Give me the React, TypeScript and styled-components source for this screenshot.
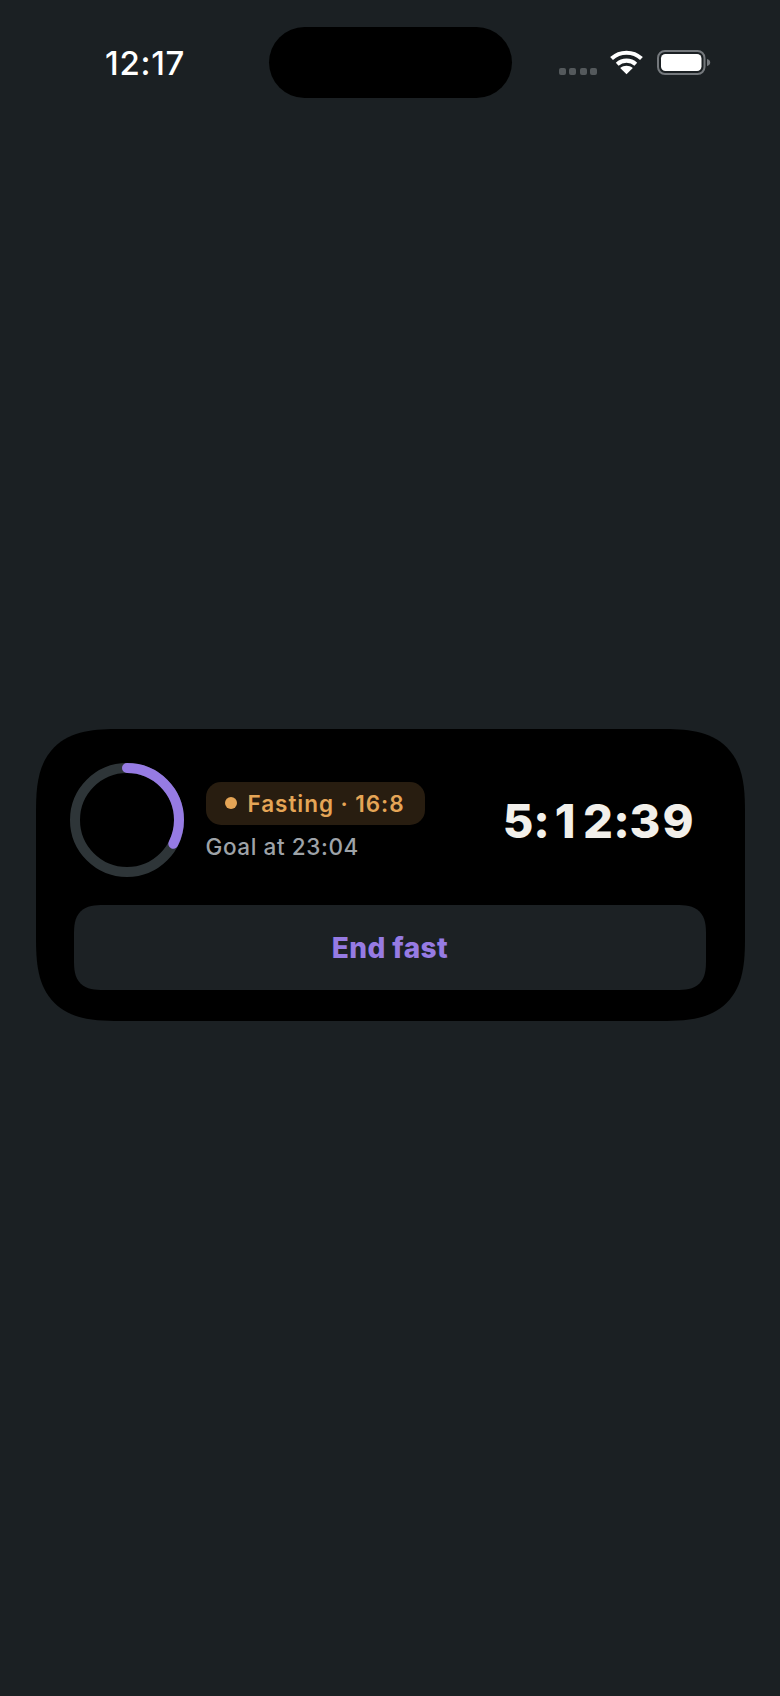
import styled, { createGlobalStyle } from 'styled-components';

const GlobalStyle = createGlobalStyle`
  html, body {
    margin: 0;
    padding: 0;
    background-color: #1b2023;
  }
`;

const Screen = styled.div`
  width: 780px;
  height: 1696px;
  display: flex;
  flex-direction: column;
  background-color: #1b2023;
  font-family: Inter, "Noto Sans", sans-serif;
  overflow: hidden;
`;

const StatusBar = styled.div`
  display: flex;
  align-items: center;
  height: 71px;
  padding: 27px 60px 0 105px;
`;

const Clock = styled.div`
  width: 163.5px;
  flex-shrink: 0;
  font-family: Inter, sans-serif;
  font-size: 33px;
  font-weight: 500;
  color: #ffffff;
  letter-spacing: 0.7px;
`;

const Island = styled.div`
  width: 243px;
  height: 71px;
  flex-shrink: 0;
  border-radius: 36px;
  background-color: #000000;
`;

const StatusIcons = styled.div`
  display: flex;
  align-items: center;
  margin-left: 47.5px;
`;

const SignalDots = styled.div`
  display: flex;
  gap: 3.4px;
  margin: 17px 13px 0 0;
`;

const SignalDot = styled.span`
  width: 7px;
  height: 7px;
  border-radius: 2px;
  background-color: #54595c;
`;

const BatteryGap = styled.span`
  width: 14px;
`;

const Main = styled.main`
  flex: 1;
  display: flex;
  align-items: center;
  justify-content: center;
  padding-bottom: 44px;
`;

const Card = styled.section`
  width: 709px;
  height: 292px;
  box-sizing: border-box;
  padding: 34px 38px 31px;
  display: flex;
  flex-direction: column;
  justify-content: space-between;
  background-color: #000000;
  border-radius: 84px;
  corner-shape: superellipse(1.5);
`;

const TopRow = styled.div`
  display: flex;
  align-items: center;
  margin-left: -4px;
`;

const Info = styled.div`
  display: flex;
  flex-direction: column;
  align-items: flex-start;
  margin-left: 22px;
  flex: 1;
`;

const Pill = styled.div`
  display: flex;
  align-items: center;
  height: 43px;
  width: 219px;
  box-sizing: border-box;
  margin-top: 1px;
  padding-left: 19px;
  gap: 11px;
  border-radius: 15px;
  background-color: #281d10;
  color: #e5a556;
  font-size: 22.5px;
  font-weight: 600;
  letter-spacing: 0.95px;
`;

const PillDot = styled.span`
  width: 12px;
  height: 12px;
  border-radius: 50%;
  background-color: #e5a556;
`;

const Goal = styled.div`
  margin-top: 8px;
  font-size: 22.5px;
  font-weight: 500;
  color: #9ea3a8;
  letter-spacing: 0.6px;
`;

const Timer = styled.div`
  display: flex;
  margin-right: 12px;
  font-size: 47px;
  font-weight: 800;
  color: #f2f0eb;
`;

const TimerCell = styled.span<{ $colon?: boolean }>`
  width: ${props => (props.$colon ? '14px' : '33px')};
  display: flex;
  justify-content: center;
`;

const EndButton = styled.button`
  display: block;
  width: 632px;
  height: 85px;
  padding: 0;
  align-self: center;
  border: none;
  border-radius: 30px;
  corner-shape: superellipse(1.5);
  background-color: #1c2124;
  color: #967be3;
  font-family: Inter, sans-serif;
  font-size: 28px;
  font-weight: 800;
  letter-spacing: 0.45px;
`;

function ProgressRing({ progress }: { progress: number }) {
  const r = 52;
  const c = 2 * Math.PI * r;
  return (
    <svg width="114" height="114" viewBox="0 0 114 114">
      <circle cx="57" cy="57" r={r} fill="none" stroke="#2e3538" strokeWidth="10" />
      <circle
        cx="57"
        cy="57"
        r={r}
        fill="none"
        stroke="#967be3"
        strokeWidth="10"
        strokeLinecap="round"
        strokeDasharray={`${c * progress} ${c}`}
        transform="rotate(-90 57 57)"
      />
    </svg>
  );
}

function WifiIcon() {
  return (
    <svg width="33" height="25" viewBox="0 0 32 24">
      <path d="M1.5 8.2C9.8 0.6 22.2 0.6 30.5 8.2" fill="none" stroke="#fff" strokeWidth="4" />
      <path d="M7 13.6C12 9 20 9 25 13.6" fill="none" stroke="#fff" strokeWidth="4" />
      <path d="M16 23.5L9.9 17.4C13.4 14.3 18.6 14.3 22.1 17.4Z" fill="#fff" />
    </svg>
  );
}

function BatteryIcon() {
  return (
    <svg width="54" height="25" viewBox="0 0 54 25">
      <rect x="1" y="1" width="46.5" height="23" rx="7" fill="none" stroke="#74787c" strokeWidth="2" />
      <rect x="4" y="4" width="40.5" height="17" rx="4.5" fill="#fff" />
      <path d="M50 9C52 9.5 53.2 10.8 53.2 12.5C53.2 14.2 52 15.5 50 16Z" fill="#74787c" />
    </svg>
  );
}

const timerText = '5:12:39';

export default function App() {
  return (
    <Screen>
      <GlobalStyle />
      <StatusBar>
        <Clock>12:17</Clock>
        <Island />
        <StatusIcons>
          <SignalDots>
            <SignalDot />
            <SignalDot />
            <SignalDot />
            <SignalDot />
          </SignalDots>
          <WifiIcon />
          <BatteryGap />
          <BatteryIcon />
        </StatusIcons>
      </StatusBar>
      <Main>
        <Card>
          <TopRow>
            <ProgressRing progress={0.325} />
            <Info>
              <Pill>
                <PillDot />
                Fasting · 16:8
              </Pill>
              <Goal>Goal at 23:04</Goal>
            </Info>
            <Timer>
              {timerText.split('').map((ch, i) => (
                <TimerCell key={i} $colon={ch === ':'}>{ch}</TimerCell>
              ))}
            </Timer>
          </TopRow>
          <EndButton>End fast</EndButton>
        </Card>
      </Main>
    </Screen>
  );
}
